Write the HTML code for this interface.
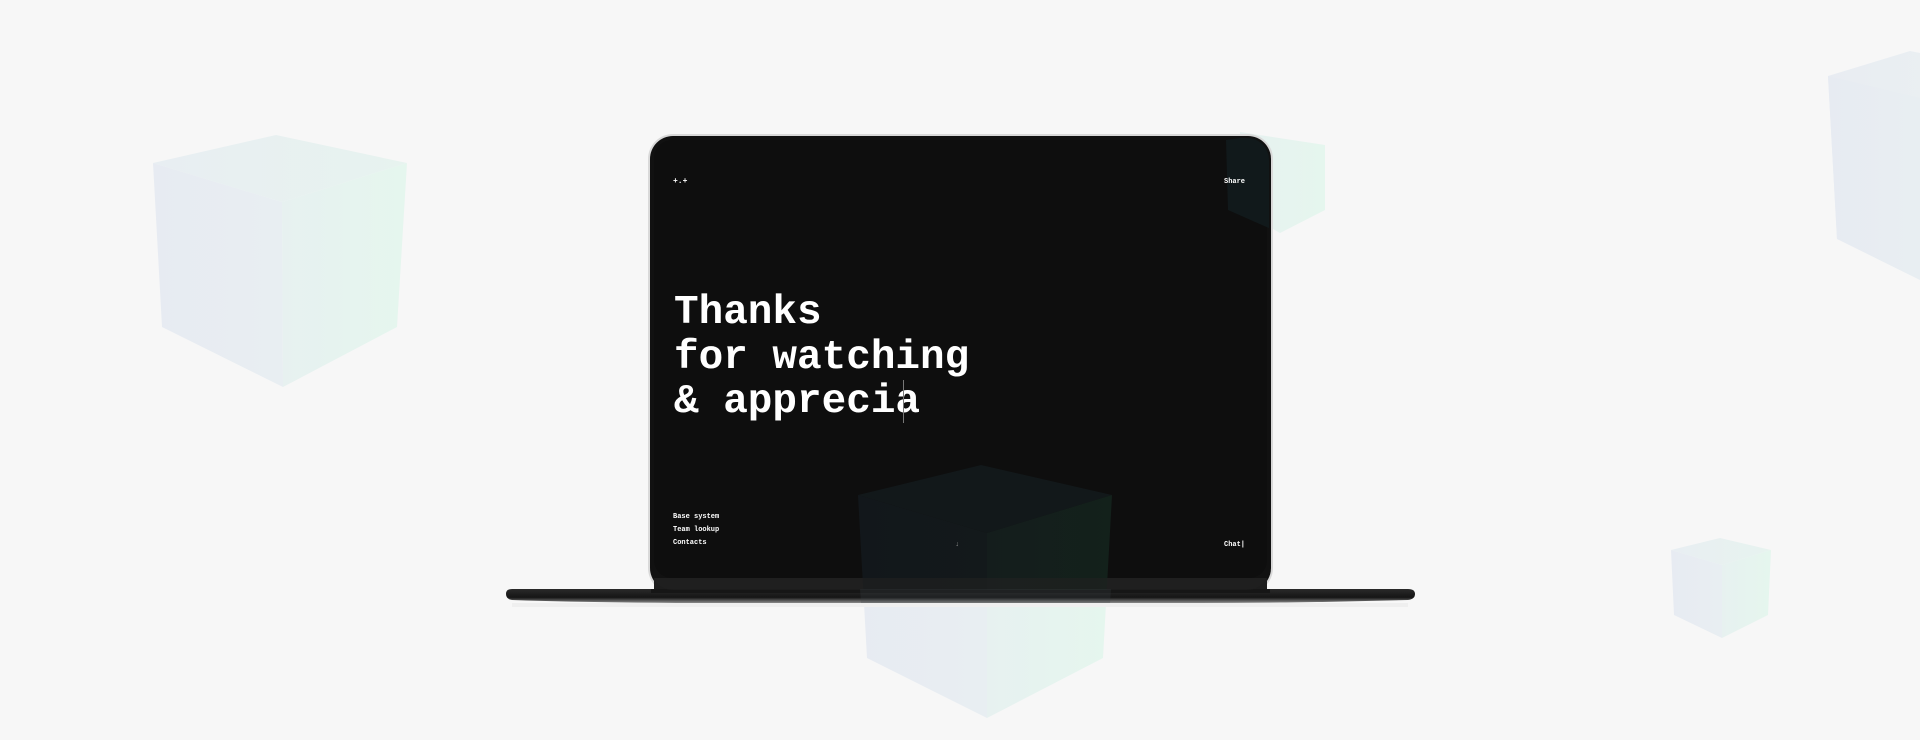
<!DOCTYPE html>
<html><head><meta charset="utf-8"><style>
html,body{margin:0;padding:0;background:#f7f7f7;width:1920px;height:740px;overflow:hidden}
svg{display:block}
text{font-family:"Liberation Mono",monospace;font-weight:bold;fill:#fff}
</style></head><body>
<svg width="1920" height="740" viewBox="0 0 1920 740" xmlns="http://www.w3.org/2000/svg">
<defs>
<linearGradient id="lf" x1="0" y1="0" x2="1" y2="0"><stop offset="0" stop-color="#e7ebf2"/><stop offset="1" stop-color="#e8eef2"/></linearGradient>
<linearGradient id="rf" x1="0" y1="0" x2="1" y2="0"><stop offset="0" stop-color="#e7f1f0"/><stop offset="1" stop-color="#e5f6ee"/></linearGradient>
<linearGradient id="tf" x1="0" y1="0" x2="1" y2="0"><stop offset="0" stop-color="#e8eef2"/><stop offset="1" stop-color="#e7f3ef"/></linearGradient>
<linearGradient id="dl" x1="0" y1="0" x2="1" y2="0"><stop offset="0" stop-color="#12171b"/><stop offset="1" stop-color="#13191b"/></linearGradient>
<linearGradient id="dr" x1="0" y1="0" x2="1" y2="0"><stop offset="0" stop-color="#141d1c"/><stop offset="1" stop-color="#13211b"/></linearGradient>
<clipPath id="scr"><rect x="651" y="138" width="618" height="452" rx="22"/></clipPath>
<linearGradient id="base" x1="0" y1="0" x2="0" y2="1"><stop offset="0" stop-color="#2a2a2a"/><stop offset="0.6" stop-color="#151515"/><stop offset="1" stop-color="#8a8a8a"/></linearGradient>
</defs>
<polygon points="276,135 407,163 282,202 153,163" fill="url(#tf)"/>
<polygon points="153,163 282,202 283,387 162,327" fill="url(#lf)"/>
<polygon points="282,202 407,163 397,327 283,387" fill="url(#rf)"/>
<polygon points="1828,76 1910,51 1920,53 1920,98 1837,239" fill="url(#lf)" opacity="0.9"/>
<polygon points="1828,76 1920,98 1920,280 1837,239" fill="url(#lf)"/>
<polygon points="1720,538 1771,550 1722,565 1671,550" fill="url(#tf)"/>
<polygon points="1671,550 1722,565 1722,638 1674,615" fill="url(#lf)"/>
<polygon points="1722,565 1771,550 1768,615 1722,638" fill="url(#rf)"/>
<polygon points="1240,132 1325,145 1325,210 1280,233 1240,210" fill="url(#rf)"/>
<polygon points="981,465 1112,495 987,533 858,495" fill="url(#tf)"/>
<polygon points="858,495 987,533 987,718 867,658" fill="url(#lf)"/>
<polygon points="987,533 1112,495 1103,658 987,718" fill="url(#rf)"/>
<path d="M512,589 L1408,589 Q1415,589 1415,594 Q1415,599 1408,600 Q1300,603 1200,603 L720,603 Q600,603 512,600 Q506,599 506,594 Q506,589 512,589Z" fill="url(#base)"/>
<rect x="512" y="603" width="896" height="4" fill="#efefef"/>
<rect x="648" y="134" width="625" height="459" rx="25" fill="#d9d9d9"/>
<rect x="650" y="136" width="621" height="455" rx="23" fill="#111"/>
<rect x="654" y="140" width="613" height="438" rx="18" fill="#0e0e0e"/>
<rect x="654" y="578" width="613" height="12" fill="#1d1d1d"/>
<rect x="651" y="589" width="619" height="4" fill="#161616"/>
<g clip-path="url(#scr)">
<polygon points="981,465 1112,495 987,533 858,495" fill="#12181a"/>
<polygon points="858,495 987,533 987,718 867,658" fill="url(#dl)"/>
<polygon points="987,533 1112,495 1103,658 987,718" fill="url(#dr)"/>
<polygon points="1226,140 1280,132 1325,145 1325,210 1280,233 1228,210" fill="#11191b"/>
<rect x="654" y="578" width="613" height="12" fill="#222" opacity="0.6"/>
</g>
<polygon points="860,589 1111,589 1110,603 861,603" fill="#3a4448" opacity="0.25"/>
<text x="673" y="183" font-size="8">+.+</text>
<text x="1224" y="183" font-size="7">Share</text>
<text x="674" y="323" font-size="41">Thanks</text>
<text x="674" y="368" font-size="41">for watching</text>
<text x="674" y="412" font-size="41">&amp; apprecia</text>
<rect x="903" y="380" width="1" height="43" fill="#777"/>
<text x="673" y="518" font-size="7">Base system</text>
<text x="673" y="531" font-size="7">Team lookup</text>
<text x="673" y="544" font-size="7">Contacts</text>
<text x="955" y="546" font-size="7" style="fill:#999">↓</text>
<text x="1224" y="546" font-size="7">Chat|</text>
</svg>
</body></html>
